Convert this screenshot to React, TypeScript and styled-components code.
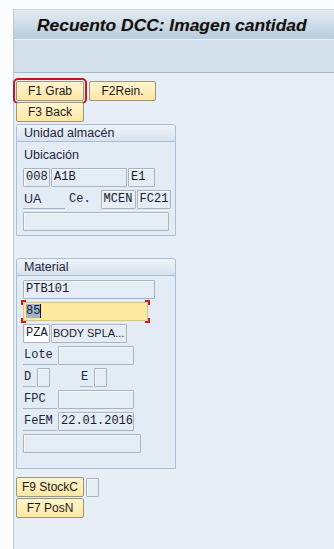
import React from "react";
import styled, { createGlobalStyle, css } from "styled-components";

const GlobalStyle = createGlobalStyle`
  html, body {
    margin: 0;
    padding: 0;
    background: #fbfcfd;
  }
  body {
    font-family: "Liberation Sans", Arial, sans-serif;
  }
`;

const Screen = styled.div`
  margin: 9px 0 0 13px;
  min-height: 540px;
  background: #e7eef6;
  border-left: 1px solid #bccad8;
`;

const TitleBar = styled.div`
  height: 29px;
  padding-left: 23px;
  border-top: 1px solid #c9d5e0;
  background: linear-gradient(#e3ebf3, #b8cce0);
  font: italic bold 17.4px "Liberation Sans", Arial, sans-serif;
  line-height: 31px;
  color: #111;
  text-shadow: 0 0 1px rgba(120, 90, 0, 0.35);
`;

const Toolbar = styled.div`
  height: 32px;
  background: #d2dee9;
  border-top: 1px solid #eef3f8;
  border-bottom: 1px solid #a8b6c4;
`;

const Content = styled.div`
  padding: 8px 0 0 2px;
`;

const KeyRow = styled.div`
  display: flex;
  gap: 5px;
  align-items: center;
  margin-bottom: 1px;
`;

const Key = styled.button<{ $focus?: boolean; $w?: number }>`
  box-sizing: border-box;
  width: ${(p) => p.$w || 68}px;
  height: 20px;
  padding: 0;
  border: 1px solid #9d957a;
  border-radius: 2px;
  background: linear-gradient(#fff5cf, #ffe7a2);
  font: 12px "Liberation Sans", Arial, sans-serif;
  color: #1a1a1a;
  ${(p) =>
    p.$focus &&
    css`
      outline: 2px solid #c4161c;
      outline-offset: 1px;
    `}
`;

const Group = styled.div<{ $top: number }>`
  box-sizing: border-box;
  width: 160px;
  margin-top: ${(p) => p.$top}px;
  border: 1px solid #a8bfd5;
  border-radius: 3px 3px 0 0;
  background: #e3ebf4;
`;

const GroupHead = styled.div`
  height: 16px;
  padding-left: 7px;
  border-bottom: 1px solid #a8bfd5;
  border-radius: 3px 3px 0 0;
  background: linear-gradient(#eff4f9, #d6e2ee);
  font-size: 12.5px;
  line-height: 16px;
  color: #1d2540;
`;

const GroupBody = styled.div<{ $pb: number }>`
  padding: 2px 0 ${(p) => p.$pb}px 6px;
`;

const Row = styled.div`
  display: flex;
  align-items: center;
  gap: 1px;
  height: 22px;
`;

const Text = styled.div<{ $mono?: boolean; $w?: number; $ml?: number; $line?: boolean }>`
  box-sizing: border-box;
  height: 19px;
  padding-left: 1px;
  width: ${(p) => (p.$w ? `${p.$w}px` : "auto")};
  margin-left: ${(p) => p.$ml || 0}px;
  font: ${(p) =>
    p.$mono ? `12px "Liberation Mono", "Courier New", monospace` : `12.5px "Liberation Sans", Arial, sans-serif`};
  line-height: 18px;
  color: #1d2540;
  white-space: nowrap;
  ${(p) =>
    p.$line &&
    css`
      border-bottom: 1px solid #a5b5c6;
    `}
`;

const Field = styled.div<{ $w: number; $ml?: number; $white?: boolean; $sans?: boolean }>`
  box-sizing: border-box;
  width: ${(p) => p.$w}px;
  height: 19px;
  margin-left: ${(p) => p.$ml || 0}px;
  padding-left: ${(p) => (p.$sans ? 1 : 2)}px;
  border: 1px solid #aab3bd;
  border-radius: 1px;
  background: ${(p) => (p.$white ? "#ffffff" : "#e4ecf4")};
  box-shadow: inset 1px 1px 0 #f4f7fa;
  font: ${(p) =>
    p.$sans ? `11px "Liberation Sans", Arial, sans-serif` : `12px "Liberation Mono", "Courier New", monospace`};
  line-height: 17px;
  color: #1a1a2e;
  white-space: nowrap;
  overflow: hidden;
`;

const red = "#d0181f";

/* red corner marks around the field that holds the cursor */
const Focused = styled.div`
  margin-left: -2px;
  padding: 2px;
  background:
    linear-gradient(${red}, ${red}) left top / 5px 2px no-repeat,
    linear-gradient(${red}, ${red}) left top / 2px 5px no-repeat,
    linear-gradient(${red}, ${red}) right top / 5px 2px no-repeat,
    linear-gradient(${red}, ${red}) right top / 2px 5px no-repeat,
    linear-gradient(${red}, ${red}) left bottom / 5px 2px no-repeat,
    linear-gradient(${red}, ${red}) left bottom / 2px 5px no-repeat,
    linear-gradient(${red}, ${red}) right bottom / 5px 2px no-repeat,
    linear-gradient(${red}, ${red}) right bottom / 2px 5px no-repeat;
`;

const Input = styled(Field)`
  background: #fee99f;
  border-color: #d7c48a;
  box-shadow: none;
`;

const Selected = styled.span`
  background: #a3b4c9;
  color: #1a1a2e;
  border-right: 1px solid #111;
`;

const Bottom = styled.div`
  margin-top: 8px;
`;

const SmallBox = styled(Field)`
  margin-left: -3px;
`;

export default function App() {
  return (
    <>
      <GlobalStyle />
      <Screen>
        <TitleBar>Recuento DCC: Imagen cantidad</TitleBar>
        <Toolbar />
        <Content>
          <KeyRow>
            <Key $focus>F1 Grab</Key>
            <Key $w={67}>F2Rein.</Key>
          </KeyRow>
          <KeyRow>
            <Key>F3 Back</Key>
          </KeyRow>

          <Group $top={2}>
            <GroupHead>Unidad almacén</GroupHead>
            <GroupBody $pb={3}>
              <Row>
                <Text>Ubicación</Text>
              </Row>
              <Row>
                <Field $w={27}>008</Field>
                <Field $w={76}>A1B</Field>
                <Field $w={27}>E1</Field>
              </Row>
              <Row>
                <Text $w={42} $line>UA</Text>
                <Text $mono $ml={2}>Ce.</Text>
                <Field $w={35} $ml={9}>MCEN</Field>
                <Field $w={34}>FC21</Field>
              </Row>
              <Row>
                <Field $w={146} />
              </Row>
            </GroupBody>
          </Group>

          <Group $top={22}>
            <GroupHead>Material</GroupHead>
            <GroupBody $pb={14}>
              <Row>
                <Field $w={132}>PTB101</Field>
              </Row>
              <Row>
                <Focused>
                  <Input $w={125}>
                    <Selected>85</Selected>
                  </Input>
                </Focused>
              </Row>
              <Row>
                <Field $w={27} $white>PZA</Field>
                <Field $w={76} $sans>BODY SPLA...</Field>
              </Row>
              <Row>
                <Text $mono $w={34} $line>Lote</Text>
                <Field $w={76}>{""}</Field>
              </Row>
              <Row>
                <Text $mono $w={13} $line>D</Text>
                <Field $w={13} />
                <Text $mono $w={13} $ml={29} $line>E</Text>
                <Field $w={13} />
              </Row>
              <Row>
                <Text $mono $w={34} $line>FPC</Text>
                <Field $w={76} />
              </Row>
              <Row>
                <Text $mono $w={34} $line>FeEM</Text>
                <Field $w={76}>22.01.2016</Field>
              </Row>
              <Row>
                <Field $w={118} />
              </Row>
            </GroupBody>
          </Group>

          <Bottom>
            <KeyRow>
              <Key>F9 StockC</Key>
              <SmallBox $w={13} />
            </KeyRow>
            <KeyRow>
              <Key>F7 PosN</Key>
            </KeyRow>
          </Bottom>
        </Content>
      </Screen>
    </>
  );
}
